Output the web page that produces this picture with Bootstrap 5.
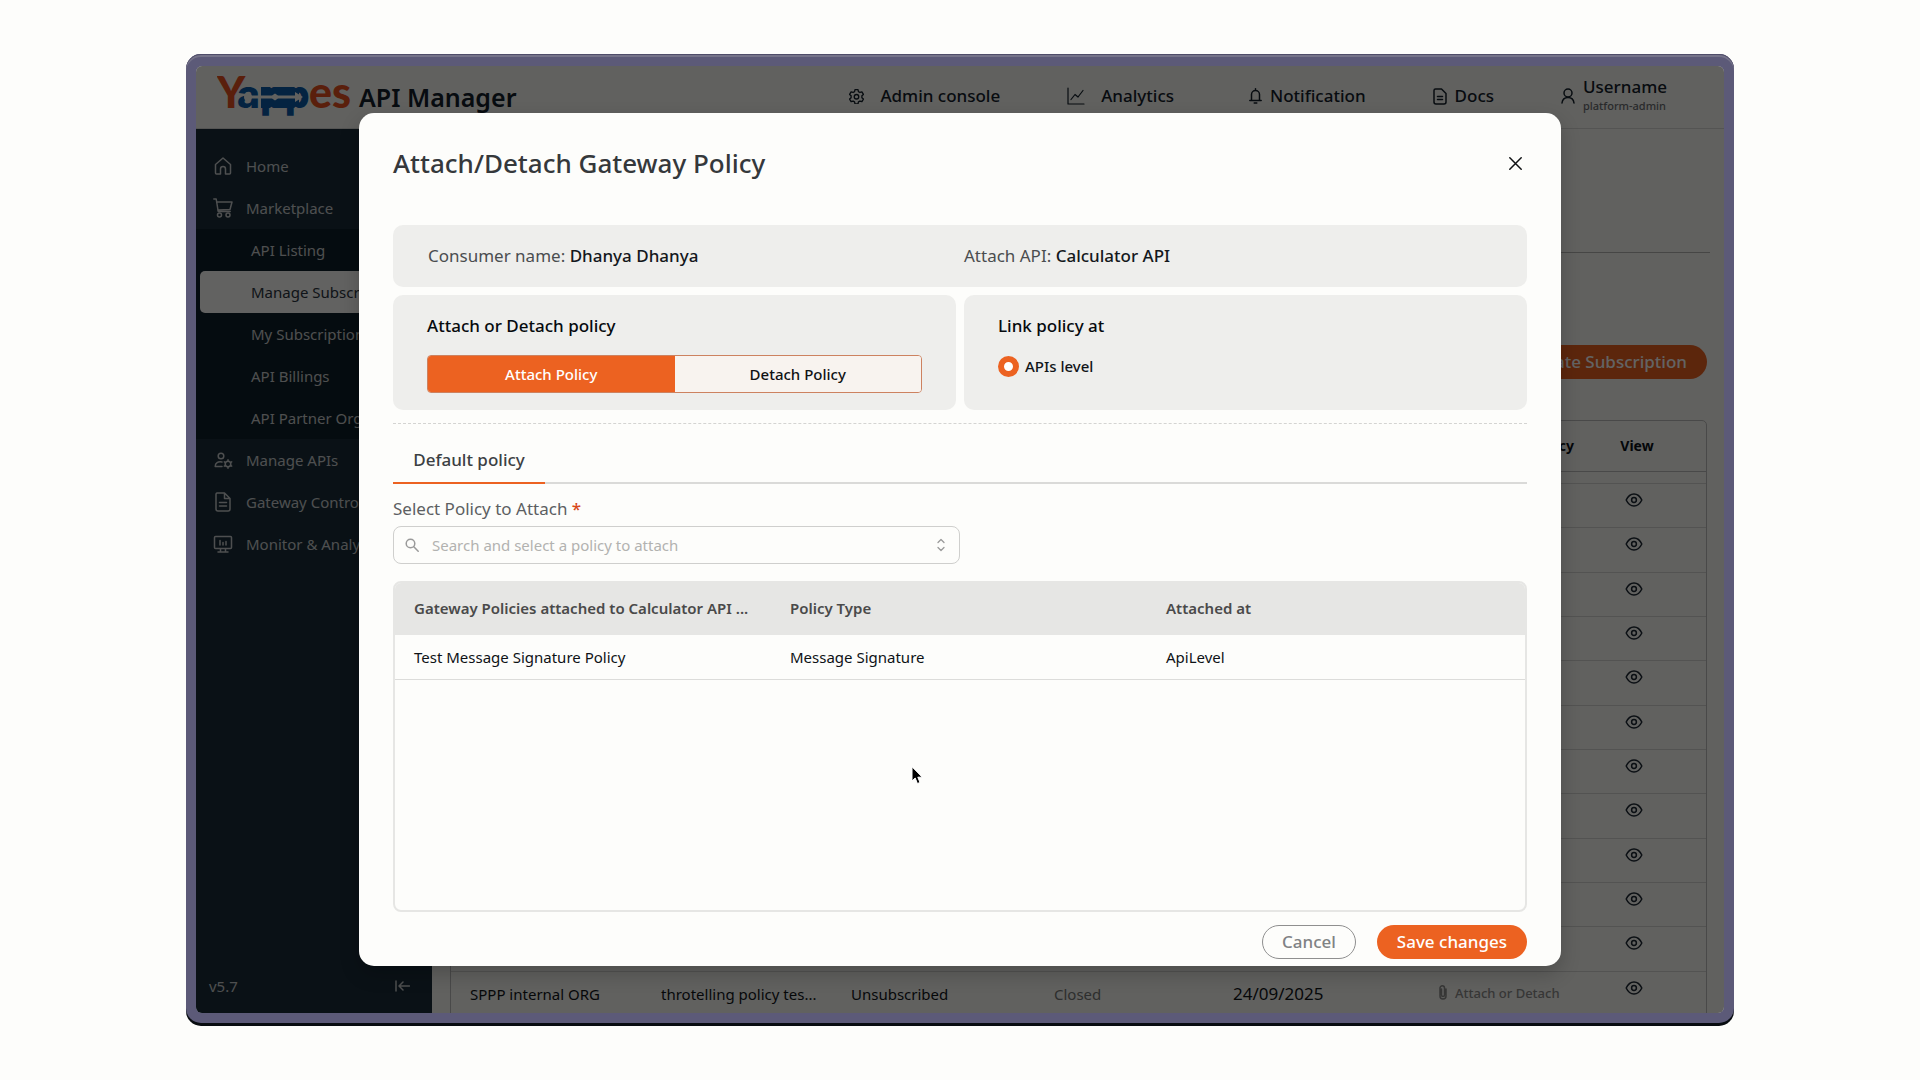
<!DOCTYPE html>
<html lang="en">
<head>
<meta charset="utf-8">
<meta name="viewport" content="width=device-width, initial-scale=1">
<title>Yappes API Manager</title>
<link href="https://cdn.jsdelivr.net/npm/bootstrap@5.3.0/dist/css/bootstrap.min.css" rel="stylesheet">
<style>
  :root { --brand: #ec6221; --paper: #fdfdfb; --ink: #14202a; }
  body { font-family: "Noto Sans", "Open Sans", sans-serif; background: var(--paper); font-size: 15px; line-height: 22px; color: #111519; }
  svg { flex: none; fill: none; stroke: currentColor; stroke-width: 1.5; stroke-linecap: round; stroke-linejoin: round; display: block; }
  a { color: inherit; text-decoration: none; }
  .stage { padding: 54px 186px 57px 186px; }
  .device { height: calc(100vh - 111px); padding: 12px 10px 10px 10px; border-radius: 15px; background: #5c5a78; box-shadow: 0 3px 0 #080c10, inset 0 1px 0 #4f4d69, inset 0 3px 0 #757389; }
  .screen { border-radius: 6px; background: #f9f9f5; }
  .topbar { height: 63px; border-bottom: 1px solid #d9d9d7; padding: 0 57px 0 21px; color: var(--ink); }
  .topbar .product { font-size: 25px; line-height: 36px; font-weight: 600; margin-left: 2px; }
  .brand-mark { stroke: none; }
  .topnav { gap: 67px; font-size: 17px; font-weight: 500; padding-bottom: 2px; }
  .who { padding-bottom: 4px; }
  .role-name { font-size: 11px; line-height: 14px; color: #6a6d70; font-weight: 500; }
  .user-name { line-height: 24px; }
  .sidebar { width: 236px; background: #1a2e3a; color: #c9cccd; padding: 16px 0 16px; font-size: 15px; }
  .sidebar a { height: 42px; display: flex; align-items: center; padding-left: 17px; white-space: nowrap; }
  .sidebar a svg { margin-right: 13px; }
  .subnav { background: #0f1f29; }
  .sidebar .subnav a { padding-left: 51px; margin-left: 4px; border-radius: 5px 0 0 5px; }
  .sidebar .subnav a.current { background: #fbfbf9; color: #2b3540; }
  .side-foot { padding: 0 22px 0 13px; }
  .content { padding: 123px 17px 0 18px; }
  .content .rule { border-top: 1px solid #b5b5b3; margin-right: -3px; }
  .actions { margin: 92px 0 41px; }
  .btn-round { border-radius: 17px; height: 34px; padding: 0 19px; font-size: 17px; line-height: 22px; font-weight: 500; }
  .btn-brand, .btn-brand:hover { background: var(--brand); color: #fff; border: 0; padding: 0 20px; }
  .subs { height: 597px; table-layout: fixed; border: 1px solid #bdbdbb; border-collapse: separate; border-spacing: 0; border-radius: 5px 5px 0 0; }
  .subs th { height: 51px; font-size: 14px; font-weight: 700; border-bottom: 1px solid #bdbdbb; color: #0b1118; }
  .subs .spacer td { height: 12px; padding: 0; }
  .subs tbody td { height: 44px; border-bottom: 1px solid #d5d5d3; vertical-align: top; padding: 11px 0 0 19px; white-space: nowrap; }
  .subs tbody td:last-child { padding: 7px 13px 0 0; color: #1d2833; }
  .subs .closed { padding-left: 32px; color: #767876; }
  .subs .date-cell { font-size: 17px; padding-left: 20px; }
  .subs .link-cell { font-size: 13px; font-weight: 500; color: #8d8d8b; padding: 10px 0 0 6px; }
  .dimmer { background: rgba(0,0,0,.61); }
  .policy-box { width: 1202px; max-width: 100%; background: var(--paper); border-radius: 15px; padding: 32px 34px 7px 34px; box-shadow: 0 8px 20px rgba(0,0,0,.2); }
  .policy-box h1 { font-size: 26px; line-height: 36px; font-weight: 500; color: #35383b; }
  .close-x { border: 0; background: none; padding: 0; margin-right: 5px; color: #101214; }
  .panel { background: #eeeeec; border-radius: 10px; }
  .info { height: 62px; margin-top: 44px; font-size: 17px; color: #4a4d4f; }
  .info > div { padding-left: 35px; }
  .info > div + div { padding-left: 4px; }
  .info strong { font-weight: 500; color: #14181c; }
  .choice { height: 115px; padding: 19px 34px 0; }
  .choice h2 { font-size: 17px; line-height: 24px; font-weight: 500; margin: 0 0 17px; color: #060a0e; }
  .seg { height: 38px; border: 1px solid #cd8260; border-radius: 4px; overflow: hidden; }
  .seg .btn { border: 0; border-radius: 0; padding: 0; font-size: 15px; font-weight: 500; width: 50%; background: #f8f3ef; color: #101214; }
  .seg .btn.on { background: var(--brand); color: #fff; }
  .level { accent-color: var(--brand); appearance: none; width: 21px; height: 21px; border-radius: 50%; border: 6px solid var(--brand); background: #fff; margin: 0 6px 0 0; }
  .dashed { border-top: 1px dashed #d4d4d2; margin-top: 13px; }
  .tabs-line { border-bottom: 2px solid #dadad8; margin-top: 19px; }
  .tabs-line .tab-link { border: 0; background: none; width: 152px; font-size: 17px; line-height: 24px; font-weight: 500; padding: 5px 0 10px; color: #3c4043; border-bottom: 2px solid var(--brand); margin-bottom: -2px; }
  .pick-label { font-size: 17px; line-height: 24px; color: #5c5f62; margin: 13px 0 5px; }
  .pick-label b { color: #d8481c; font-weight: 500; }
  .pick { width: 50%; height: 38px; border: 1px solid #cfcfcd; border-radius: 8px; padding: 0 12px 0 11px; color: #9a9a9a; }
  .pick input { border: 0; outline: 0; background: none; font-size: 15px; padding: 0 0 0 13px; }
  .pick input::placeholder { color: #b2b2b0; opacity: 1; }
  .attached { height: 331px; margin-top: 17px; border: 2px solid #e6e6e4; border-radius: 8px; overflow: hidden; }
  .attached table { table-layout: fixed; }
  .attached th { background: #e6e6e4; height: 52px; padding: 0 19px 2px; font-size: 15px; font-weight: 600; color: #4a4a4a; }
  .attached td { height: 44px; padding: 0 19px; font-size: 15px; border-bottom: 1px solid #dcdcda; color: #0e1216; }
  .foot { gap: 21px; margin-top: 13px; }
  .btn-quiet { background: var(--paper); border: 1px solid #8f8f8f; color: #808284; }
  .pointer { left: 715px; top: 700px; stroke: #fff; stroke-width: 1; fill: #000; }
</style>
</head>
<body>
<svg width="0" height="0" class="position-absolute" aria-hidden="true">
  <symbol id="eye" viewBox="0 0 18 18"><path d="M1.2 9C3 5.2 5.800 3 9 3s6 2.200 7.800 6c-1.800 3.800-4.600 6-7.800 6S3 12.800 1.200 9z"/><circle cx="9" cy="9" r="2.400"/></symbol>
  <symbol id="doc" viewBox="0 0 20 20"><path d="M4 1h7.500L17 6.500V17a2 2 0 0 1-2 2H5a2 2 0 0 1-2-2V2.500A1.500 1.500 0 0 1 4 1zM11.500 1v5.500H17M6.500 10.500h7M6.500 14h7"/></symbol>
</svg>
<div class="stage">
  <div class="device">
    <div class="screen position-relative overflow-hidden h-100 d-flex flex-column">
      <header class="topbar d-flex align-items-center justify-content-between flex-shrink-0">
        <div class="d-flex align-items-center">
          <svg class="brand-mark" width="140" height="62" viewBox="0 -8 140 62" role="img" aria-label="Yappes">
            <text y="34" font-family="Lato, sans-serif" font-weight="900" font-size="43" fill="#e8501f"><tspan x="0">Y</tspan><tspan x="20" font-family="Inter, sans-serif" font-weight="800" font-size="39" fill="#0b5aa8">app</tspan><tspan x="92">es</tspan></text>
            <path d="M44 13h9l3 3 3-3h18l5 3v14l-5 4H59l-3-3-3 3h-9z" fill="#0b5aa8"/>
            <circle cx="31" cy="23" r="4" fill="#f9f9f5"/>
            <path d="M31 21.500h24l3-2 3 2h17V18l8 5-8 5v-3.500H61l-3 2-3-2H31z" fill="#f9f9f5"/>
          </svg>
          <span class="product">API Manager</span>
        </div>
        <nav class="topnav d-flex align-items-center">
          <a href="#" class="d-flex align-items-center"><svg class="me-3" width="15" height="16" viewBox="0 0 20 20"><path d="M8 1.500h4l.6 2.600 2 1.200 2.600-.8 2 3.400-2 1.900v2.400l2 1.900-2 3.400-2.600-.8-2 1.200-.6 2.600H8l-.6-2.600-2-1.200-2.600.8-2-3.400 2-1.900V9.800l-2-1.900 2-3.400 2.600.8 2-1.200z" stroke-width="1.800"/><circle cx="10" cy="11" r="3" stroke-width="1.800"/></svg>Admin console</a>
          <a href="#" class="d-flex align-items-center me-2"><svg class="me-3" width="18" height="18" viewBox="0 0 18 18"><path d="M1 1v16h16M4 12.500l4-5 3 2.500 5-6.500" stroke-width="1.200"/></svg>Analytics</a>
          <a href="#" class="d-flex align-items-center"><svg class="me-2" width="13" height="16" viewBox="0 0 13 16"><path d="M2.500 12V6.500a4 4 0 0 1 8 0V12M.8 12.500h11.400M6.500 2.300V.8M5.200 15h2.600"/></svg>Notification</a>
          <a href="#" class="d-flex align-items-center"><svg class="me-2" width="14" height="17" viewBox="0 0 14 17"><path d="M2.500 1h6L13 5.500V14a2 2 0 0 1-2 2H3a2 2 0 0 1-2-2V2.500A1.500 1.500 0 0 1 2.500 1zM4.500 8.500h5M4.500 11.500h5"/></svg>Docs</a>
          <a href="#" class="d-flex align-items-center"><svg class="me-2" width="14" height="16" viewBox="0 0 14 16"><circle cx="7" cy="5" r="4"/><path d="M1 15c.4-3.500 2.600-5.500 6-5.500s5.600 2 6 5.500"/></svg><span class="who"><span class="user-name d-block">Username</span><span class="role-name d-block">platform-admin</span></span></a>
        </nav>
      </header>
      <div class="d-flex flex-grow-1 overflow-hidden">
        <aside class="sidebar d-flex flex-column flex-shrink-0">
          <nav>
            <a href="#"><svg width="20" height="20" viewBox="0 0 20 20"><path d="M2.500 8.500L10 2l7.500 6.500v8.500a1 1 0 0 1-1 1H12.500v-5a2.500 2.500 0 0 0-5 0v5h-4a1 1 0 0 1-1-1z"/></svg>Home</a>
            <a href="#"><svg width="20" height="20" viewBox="0 0 20 20"><path d="M.8 1h2.400l2 12.500h12M3.600 4h15.400l-2 7.500-12.300.5"/><circle cx="6.500" cy="17" r="2"/><circle cx="15" cy="17" r="2"/></svg>Marketplace</a>
            <div class="subnav">
              <a href="#">API Listing</a>
              <a href="#" class="current">Manage Subscriptions</a>
              <a href="#">My Subscriptions</a>
              <a href="#">API Billings</a>
              <a href="#">API Partner Orgs</a>
            </div>
            <a href="#"><svg width="20" height="20" viewBox="0 0 20 20"><circle cx="8" cy="6" r="2.800"/><path d="M9 12c-4-.8-6.800.8-6.800 4.500H9"/><circle cx="15" cy="14" r="2.800"/><path d="M15 9.800v1.400M15 16.800v1.400M11.300 11.900l1.300.7M17.400 15.400l1.300.7M11.300 16.100l1.300-.7M17.400 12.600l1.300-.7"/></svg>Manage APIs</a>
            <a href="#"><svg width="20" height="20" viewBox="0 0 20 20"><use href="#doc"/></svg>Gateway Control</a>
            <a href="#"><svg width="20" height="20" viewBox="0 0 20 20"><rect x="1.500" y="2.500" width="17" height="12" rx="1"/><path d="M7 6.500v4.500M10 8.500v2.500M13 7.500v3.500M7.500 15v2.500M12.500 15v2.500M5 18h10"/></svg>Monitor &amp; Analytics</a>
          </nav>
          <div class="side-foot mt-auto d-flex align-items-center justify-content-between">
            <span>v5.7</span>
            <svg width="15" height="12" viewBox="0 0 15 12"><path d="M1 1v10M14.500 6H4M8 2L4 6l4 4"/></svg>
          </div>
        </aside>
        <main class="content flex-grow-1 overflow-hidden">
          <div class="rule"></div>
          <div class="actions d-flex justify-content-end"><button type="button" class="btn btn-round btn-brand">Create Subscription</button></div>
          <table class="subs w-100">
            <colgroup><col style="width:191px"><col style="width:190px"><col style="width:190px"><col style="width:191px"><col><col style="width:142px"><col style="width:131px"></colgroup>
            <thead><tr><th></th><th></th><th></th><th></th><th></th><th class="text-end">Attach Policy</th><th class="text-center pe-2">View</th></tr></thead>
            <tbody id="rows">
              <tr class="spacer"><td colspan="7"></td></tr>
              <tr><td>SPPP internal ORG</td><td>throtelling policy tes...</td><td>Unsubscribed</td><td class="closed">Closed</td><td class="date-cell">24/09/2025</td><td class="link-cell"><a href="#" class="d-flex align-items-center"><svg width="8" height="15" viewBox="0 0 8 15" class="me-2" stroke-width="1"><path d="M2.500 4v6a1.500 1.500 0 0 0 3 0V3a2 2 0 0 0-4.500 0v8a3 3 0 0 0 6 0V4"/></svg>Attach or Detach</a></td><td><svg class="mx-auto" width="18" height="18"><use href="#eye"/></svg></td></tr>
            </tbody>
          </table>
        </main>
      </div>

      <div class="dimmer position-absolute top-0 start-0 w-100 h-100 d-flex align-items-center justify-content-center">
        <section class="policy-box position-relative" role="dialog" aria-labelledby="dlg-title">
          <div class="d-flex align-items-center justify-content-between">
            <h1 id="dlg-title" class="m-0">Attach/Detach Gateway Policy</h1>
            <button type="button" class="close-x" aria-label="Close"><svg width="13" height="13" viewBox="0 0 13 13"><path d="M.8.8l11.400 11.400M12.200.8L.8 12.200"/></svg></button>
          </div>
          <div class="panel info d-flex align-items-center">
            <div class="w-50">Consumer name: <strong>Dhanya Dhanya</strong></div>
            <div class="w-50">Attach API: <strong>Calculator API</strong></div>
          </div>
          <div class="d-flex gap-2 mt-2">
            <div class="panel choice w-50">
              <h2>Attach or Detach policy</h2>
              <div class="seg d-flex" role="group" aria-label="Attach or Detach policy">
                <button type="button" class="btn on">Attach Policy</button>
                <button type="button" class="btn">Detach Policy</button>
              </div>
            </div>
            <div class="panel choice w-50">
              <h2>Link policy at</h2>
              <div class="d-flex align-items-center"><input class="level" type="radio" name="level" id="level-api" checked><label for="level-api" class="fw-medium">APIs level</label></div>
            </div>
          </div>
          <div class="dashed"></div>
          <div class="tabs-line d-flex" role="tablist"><button type="button" role="tab" aria-selected="true" class="tab-link">Default policy</button></div>
          <label class="pick-label d-block" for="policy">Select Policy to Attach <b>*</b></label>
          <div class="pick d-flex align-items-center">
            <svg width="14" height="14" viewBox="0 0 14 14"><circle cx="5.500" cy="5.500" r="4.300"/><path d="M8.800 8.800l4.400 4.400"/></svg>
            <input id="policy" type="text" class="flex-grow-1" placeholder="Search and select a policy to attach">
            <svg width="12" height="14" viewBox="0 0 12 14"><path d="M3 4.500l3-3 3 3M3 9.500l3 3 3-3" stroke-width="1.300"/></svg>
          </div>
          <div class="attached">
            <table class="w-100">
              <colgroup><col style="width:376px"><col style="width:376px"><col></colgroup>
              <thead><tr><th>Gateway Policies attached to Calculator API ...</th><th>Policy Type</th><th>Attached at</th></tr></thead>
              <tbody><tr><td>Test Message Signature Policy</td><td>Message Signature</td><td>ApiLevel</td></tr></tbody>
            </table>
          </div>
          <div class="foot d-flex justify-content-end">
            <button type="button" class="btn btn-round btn-quiet">Cancel</button>
            <button type="button" class="btn btn-round btn-brand">Save changes</button>
          </div>
        </section>
        <svg class="pointer position-absolute" width="13" height="19" viewBox="0 0 13 19"><path d="M1 1v14l3.200-3 2.200 5.500 2.600-1L6.800 11.200H11z"/></svg>
      </div>
    </div>
  </div>
</div>
<script src="https://cdn.jsdelivr.net/npm/bootstrap@5.3.0/dist/js/bootstrap.bundle.min.js"></script>
<script>
  // Subscription rows that carry only the view action
  const last = document.querySelector('#rows tr:last-child');
  for (let i = 0; i < 11; i++) {
    const tr = document.createElement('tr');
    tr.innerHTML = '<td></td>'.repeat(6) + '<td><svg class="mx-auto" width="18" height="18"><use href="#eye"/></svg></td>';
    last.before(tr);
  }
</script>
</body>
</html>
